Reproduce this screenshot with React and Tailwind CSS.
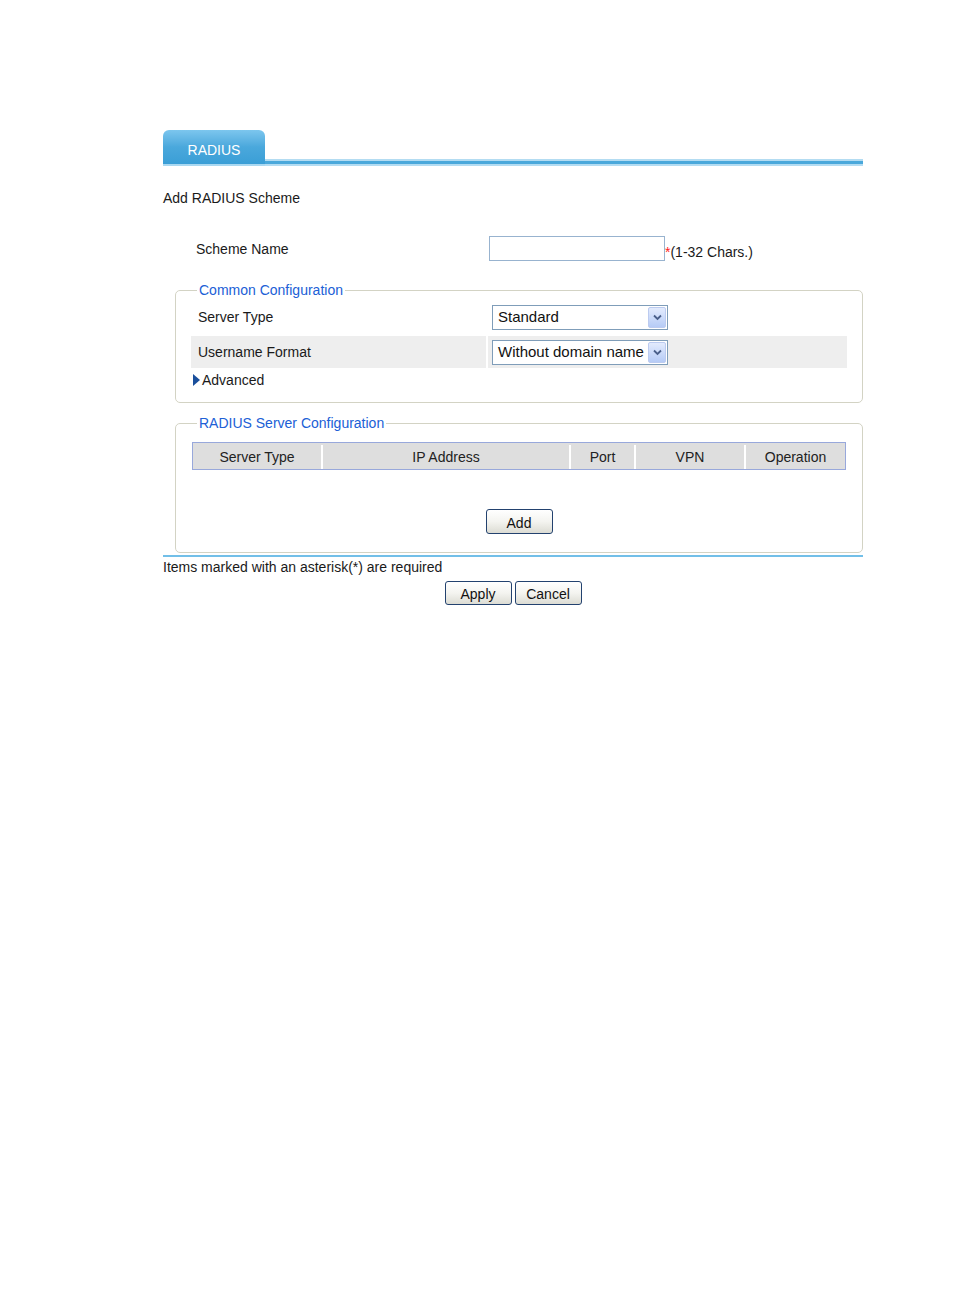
import React from "react";

function Chevron() {
  return (
    <svg width="9" height="7" viewBox="0 0 9 7">
      <path d="M1 1.5 L4.5 5 L8 1.5" stroke="#4a5f8a" strokeWidth="1.8" fill="none" />
    </svg>
  );
}

function Select({ value }) {
  return (
    <div className="flex h-[25px] w-[176px] items-center border border-[#7f9db9] bg-white">
      <span className="flex-1 overflow-hidden whitespace-nowrap pl-[5px] text-[15px] leading-[18px] text-[#111]">
        {value}
      </span>
      <span className="mr-[1px] flex h-[21px] w-[18px] shrink-0 items-center justify-center rounded-[2px] border border-[#bccbf0] bg-gradient-to-b from-[#e3ebfd] to-[#b6cbf6]">
        <Chevron />
      </span>
    </div>
  );
}

function Button({ children, h = "h-[25px]" }) {
  return (
    <div
      className={`w-[67px] ${h} flex items-center justify-center rounded-[3px] border border-[#23426f] bg-gradient-to-b from-[#ffffff] via-[#f4f4f0] to-[#dcdcd4] pt-[2px] text-[14px] text-[#111]`}
    >
      {children}
    </div>
  );
}

export default function App() {
  return (
    <div className="min-h-[1296px] w-[954px] bg-white font-['Liberation_Sans',Arial,sans-serif] text-[14px] leading-[16px] text-[#1a1a1a]">
      <div className="ml-[163px] w-[700px] pt-[130px]">
        {/* Tab bar */}
        <div className="flex items-end">
          <div className="flex h-[36px] w-[102px] items-center justify-center rounded-t-[6px] border-b-2 border-[#a9d8f1] bg-gradient-to-b from-[#7cc6ee] via-[#4aa8dc] to-[#3a9ed6] pt-[6px] text-[14px] text-white">
            RADIUS
          </div>
          <div className="h-[7px] flex-1 border-y-2 border-[#b3dcf2] bg-[#4aa8db]" />
        </div>

        <div className="mt-[24px] h-[16px]">Add RADIUS Scheme</div>

        {/* Scheme name */}
        <div className="mt-[30px] flex h-[25px] items-center">
          <div className="w-[326px] pl-[33px]">Scheme Name</div>
          <div className="h-[25px] w-[176px] border border-[#98b3cf] bg-white" />
          <span className="mb-[1px] self-end">
            <span className="text-[#ff2020]">*</span>(1-32 Chars.)
          </span>
        </div>

        {/* Common Configuration */}
        <fieldset className="ml-[12px] mt-[21px] w-[688px] rounded-[5px] border border-[#d3d3c4] px-[15px] pb-[12px]">
          <legend className="ml-[6px] px-[2px] text-[#2060d6]">Common Configuration</legend>
          <div className="mt-[3px] flex h-[32px] items-center">
            <div className="w-[297px] pl-[7px]">Server Type</div>
            <div className="pl-[4px]">
              <Select value="Standard" />
            </div>
          </div>
          <div className="mt-[3px] flex h-[32px] gap-[2px]">
            <div className="flex w-[295px] items-center bg-[#eeeeee] pl-[7px]">Username Format</div>
            <div className="flex flex-1 items-center bg-[#eeeeee] pl-[4px]">
              <Select value="Without domain name" />
            </div>
          </div>
          <div className="mt-[2px] flex h-[20px] items-center pl-[2px]">
            <svg width="7" height="12" viewBox="0 0 7 12" className="mr-[2px]">
              <path d="M0 0 L7 6 L0 12 Z" fill="#1a4f9c" />
            </svg>
            <span>Advanced</span>
          </div>
        </fieldset>

        {/* RADIUS Server Configuration */}
        <fieldset className="ml-[12px] mt-[12px] w-[688px] rounded-[5px] border border-[#d3d3c4] px-[16px] pb-[18px]">
          <legend className="ml-[5px] px-[2px] text-[#2060d6]">RADIUS Server Configuration</legend>
          <div className="mt-[11px] flex h-[28px] border border-[#98a8db] bg-[#dedede] pt-[2px] text-[#222]">
            <div className="flex w-[130px] items-center justify-center border-r-2 border-white">Server Type</div>
            <div className="flex w-[248px] items-center justify-center border-r-2 border-white">IP Address</div>
            <div className="flex w-[65px] items-center justify-center border-r-2 border-white">Port</div>
            <div className="flex w-[110px] items-center justify-center border-r-2 border-white">VPN</div>
            <div className="flex flex-1 items-center justify-center">Operation</div>
          </div>
          <div className="mt-[39px] flex justify-center">
            <Button>Add</Button>
          </div>
        </fieldset>

        <div className="mt-[2px] h-[2px] bg-[#72bfe8]" />
        <div className="mt-[2px] h-[16px]">Items marked with an asterisk(*) are required</div>

        <div className="mt-[6px] flex justify-center gap-[3px]">
          <Button h="h-[24px]">Apply</Button>
          <Button h="h-[24px]">Cancel</Button>
        </div>
      </div>
    </div>
  );
}
